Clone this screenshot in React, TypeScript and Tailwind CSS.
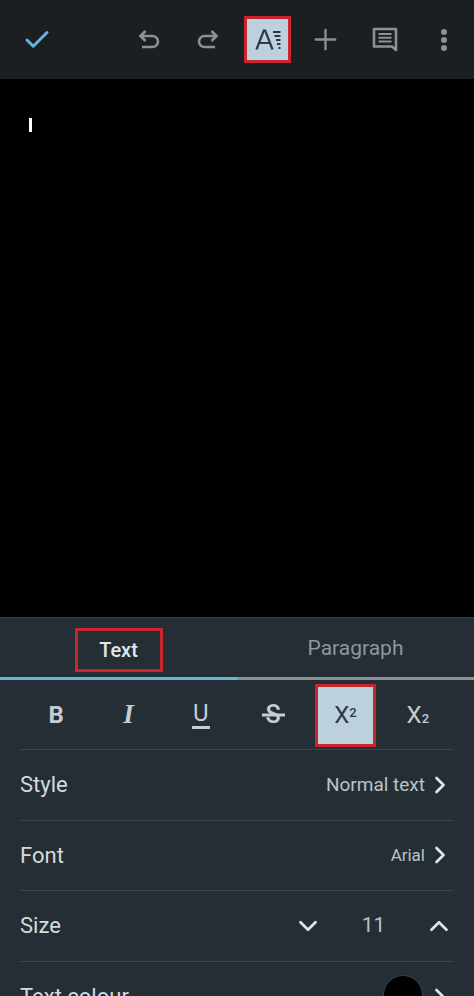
import { Check, ChevronDown, ChevronRight, ChevronUp, Plus } from 'lucide-react'

const sans = "font-['Roboto','Liberation_Sans',sans-serif]"

// Text format icon from the Docs toolbar
function FormatIcon() {
  return (
    <svg width="28" height="24" viewBox="0 0 28 24" fill="none" stroke="#2b3a46">
      <path d="M2.5 21.5 L9.8 2.5 L11.2 2.5 L18.5 21.5 M5 15 H16" strokeWidth="2.2" />
      <path d="M19 4 H26.5 M20.5 8 H26.5 M22 12 H26.5 M23 16 H26.5 M24.5 20 H26.5" strokeWidth="2" />
    </svg>
  )
}

function CommentIcon() {
  return (
    <svg width="26" height="26" viewBox="0 0 26 26" fill="none" stroke="#8e9194" strokeWidth="2.6">
      <path d="M2 2 H24 V23 L20 19.5 H2 Z" strokeLinejoin="round" />
      <path d="M6.5 7 H19.5 M6.5 10.7 H19.5 M6.5 14.4 H19.5" strokeWidth="2" />
    </svg>
  )
}

function UndoIcon({ flip }: { flip?: boolean }) {
  return (
    <svg width="22" height="21" viewBox="0 0 22 21" fill="none" stroke="#8e9194" strokeWidth="2.6" className={flip ? '-scale-x-100' : ''}>
      <path d="M7.5 2 L2.5 7 L7.5 12 M2.5 7 H14.5 a5.4 5.4 0 0 1 0 11 H4" />
    </svg>
  )
}

function ToolbarSlot({ children, boxed }: { children: React.ReactNode; boxed?: boolean }) {
  return (
    <div
      className={
        boxed
          ? 'flex h-[47px] w-[47px] translate-x-[1px] items-center justify-center border-[3px] border-[#c9252f] bg-[#bcd0de]'
          : 'flex h-[47px] w-[47px] items-center justify-center'
      }
    >
      {children}
    </div>
  )
}

function FormatButton({ children, boxed }: { children: React.ReactNode; boxed?: boolean }) {
  return (
    <div className="flex h-[69px] w-[72.4px] items-center justify-center">
      {boxed ? (
        <div className="mt-[1px] flex h-[63px] w-[61px] shrink-0 items-center justify-center border-[3px] border-[#c9252f] bg-[#bcd0de]">
          {children}
        </div>
      ) : (
        children
      )}
    </div>
  )
}

function Row({ label, children, clip }: { label: string; children: React.ReactNode; clip?: boolean }) {
  return (
    <div className={clip ? 'flex h-[70.5px] items-center justify-between' : 'flex h-[70.5px] items-center justify-between border-b border-[#3a454b]'}>
      <span className="text-[22px] text-[#d5dadc]">{label}</span>
      {children}
    </div>
  )
}

export default function App() {
  return (
    <div className={`flex h-[996px] w-[474px] flex-col overflow-hidden bg-black ${sans}`}>
      <div className="flex h-[79px] shrink-0 items-center bg-[#1c1f22] pl-[22px] pr-[7px]">
        <Check size={30} color="#63b6e2" strokeWidth={2.4} />
        <div className="ml-auto flex items-center gap-[12px]">
          <ToolbarSlot>
            <UndoIcon />
          </ToolbarSlot>
          <ToolbarSlot>
            <UndoIcon flip />
          </ToolbarSlot>
          <ToolbarSlot boxed>
            <FormatIcon />
          </ToolbarSlot>
          <ToolbarSlot>
            <Plus size={33} color="#8e9194" strokeWidth={1.7} />
          </ToolbarSlot>
          <ToolbarSlot>
            <CommentIcon />
          </ToolbarSlot>
          <ToolbarSlot>
            <div className="flex flex-col gap-[2px]">
              <div className="h-[6px] w-[6px] rounded-full bg-[#8e9194]" />
              <div className="h-[6px] w-[6px] rounded-full bg-[#8e9194]" />
              <div className="h-[6px] w-[6px] rounded-full bg-[#8e9194]" />
            </div>
          </ToolbarSlot>
        </div>
      </div>

      <div className="h-[538px] shrink-0 pl-[29px] pt-[39px]">
        <div className="h-[14px] w-[3px] bg-white" />
      </div>

      <div className="flex-1 border-t border-[#3a4247] bg-[#242e34]">
        <div className="flex h-[59px] text-[20px] font-medium">
          <div className="flex w-[237px] items-center justify-center pt-[5px]">
            <div className="flex h-[44px] w-[88px] items-center justify-center border-[3px] border-[#c9252f] text-[#e3e7e9]">Text</div>
          </div>
          <div className="flex flex-1 items-center justify-center pt-[3px] text-[21px] font-normal text-[#8d979c]">Paragraph</div>
        </div>
        <div className="flex h-[3px]">
          <div className="w-[237px] bg-[#64b5de]" />
          <div className="flex-1 bg-[#8b9194]" />
        </div>

        <div className="mx-[20px] flex h-[70px] border-b border-[#3a454b] text-[24px] text-[#c3cdd3]">
          <FormatButton>
            <span className="font-bold">B</span>
          </FormatButton>
          <FormatButton>
            <span className="font-['Liberation_Serif',serif] text-[27px] font-bold italic">I</span>
          </FormatButton>
          <FormatButton>
            <span className="border-b-[3px] border-[#c3cdd3] px-[1px] leading-[26px]">U</span>
          </FormatButton>
          <FormatButton>
            <span className="relative flex w-[23px] justify-center text-[25px] font-medium">
              S
              <span className="absolute left-0 right-0 top-1/2 h-[3px] -translate-y-1/2 bg-[#c3cdd3]" />
            </span>
          </FormatButton>
          <FormatButton boxed>
            <span className="text-[#2b3a46]">
              X<sup className="text-[13px] font-medium">2</sup>
            </span>
          </FormatButton>
          <FormatButton>
            <span>
              X<sub className="bottom-0 text-[13px] font-medium">2</sub>
            </span>
          </FormatButton>
        </div>

        <div className="mx-[20px]">
          <Row label="Style">
            <div className="flex items-center gap-[1px] text-[19px] text-[#bcc3c7]">
              Normal text
              <ChevronRight size={28} color="#dfe3e5" strokeWidth={2.3} />
            </div>
          </Row>
          <Row label="Font">
            <div className="flex items-center gap-[1px] text-[17px] text-[#bcc3c7]">
              Arial
              <ChevronRight size={28} color="#dfe3e5" strokeWidth={2.3} />
            </div>
          </Row>
          <Row label="Size">
            <div className="flex w-[161px] items-center justify-between text-[21px] text-[#bcc3c7]">
              <ChevronDown size={30} color="#dfe3e5" strokeWidth={2.2} />
              11
              <ChevronUp size={30} color="#dfe3e5" strokeWidth={2.2} />
            </div>
          </Row>
          <Row label="Text colour" clip>
            <div className="flex items-center gap-[3px]">
              <div className="mb-[4px] h-[40px] w-[40px] rounded-full border border-[#3a454b] bg-black" />
              <ChevronRight size={28} color="#dfe3e5" strokeWidth={2.3} />
            </div>
          </Row>
        </div>
      </div>
    </div>
  )
}
